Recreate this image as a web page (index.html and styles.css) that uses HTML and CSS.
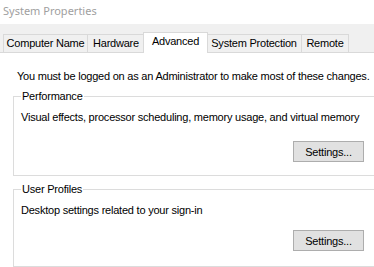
FILE: index.html
```html
<!DOCTYPE html>
<html>
<head>
<meta charset="utf-8">
<link rel="stylesheet" href="styles.css">
</head>
<body>
<div class="window">
  <div class="titlebar">System Properties</div>
  <div class="tabstrip">
    <div class="tab w-cn">Computer Name</div>
    <div class="tab w-hw">Hardware</div>
    <div class="tab active w-adv">Advanced</div>
    <div class="tab w-sp">System Protection</div>
    <div class="tab w-rm">Remote</div>
  </div>
  <div class="page">
    <p class="notice">You must be logged on as an Administrator to make most of these changes.</p>
    <fieldset class="group g1">
      <legend>Performance</legend>
      <p class="desc">Visual effects, processor scheduling, memory usage, and virtual memory</p>
      <div class="actions"><button class="btn">Settings...</button></div>
    </fieldset>
    <fieldset class="group g2">
      <legend>User Profiles</legend>
      <p class="desc">Desktop settings related to your sign-in</p>
      <div class="actions"><button class="btn">Settings...</button></div>
    </fieldset>
  </div>
</div>
</body>
</html>
```

FILE: styles.css
```css
html, body {
  margin: 0;
  padding: 0;
  background: #ffffff;
  overflow: hidden;
}
body {
  width: 374px;
  height: 267px;
  font-family: "Liberation Sans", Arial, sans-serif;
  font-size: 11px;
  letter-spacing: -0.22px;
  color: #000;
}
.window {
  display: flex;
  flex-direction: column;
}
.titlebar {
  height: 24px;
  box-sizing: border-box;
  padding: 3px 0 0 3px;
  font-family: "Noto Sans", sans-serif;
  font-size: 11px;
  letter-spacing: 0;
  color: #a0a0a0;
  background: #fff;
}
.tabstrip {
  height: 29px;
  box-sizing: border-box;
  background: #f0f0f0;
  border-bottom: 1px solid #d9d9d9;
  display: flex;
  align-items: flex-end;
  padding-left: 3px;
}
.tab {
  height: 18px;
  box-sizing: border-box;
  border: 1px solid #d9d9d9;
  border-bottom: none;
  border-left: none;
  background: #f0f0f0;
  display: flex;
  align-items: center;
  justify-content: center;
  line-height: 13px;
  white-space: nowrap;
}
.tab:first-child { border-left: 1px solid #d9d9d9; }
.w-cn { width: 85px; }
.w-hw { width: 57px; }
.w-adv { width: 65px; }
.w-sp { width: 95px; }
.w-rm { width: 47px; }
.tab.active {
  height: 21px;
  background: #fff;
  border-left: 1px solid #d9d9d9;
  margin: 0 -1px -1px -2px;
  padding-bottom: 3px;
  position: relative;
  z-index: 1;
}
.page {
  padding: 17px 0 0 13px;
}
.notice {
  margin: 0 0 7px 4px;
  line-height: 13px;
  white-space: nowrap;
}
.group {
  margin: 0 -30px 0 0;
  padding: 0 0 0 7px;
  border: 1px solid #dcdcdc;
  min-width: 0;
  box-sizing: border-box;
}
.group legend {
  padding: 0 1px;
  margin-left: 0;
  line-height: 13px;
}
.g1 { height: 86px; }
.g2 { height: 84px; margin-top: 7px; }
.desc {
  margin: 8px 0 0 0;
  line-height: 13px;
  white-space: nowrap;
}
.g1 .actions { margin-top: 17px; }
.g2 .actions { margin-top: 13px; }
.actions {
  display: flex;
  padding-left: 272px;
}
.btn {
  width: 71px;
  height: 21px;
  box-sizing: border-box;
  border: 1px solid #adadad;
  background: #e1e1e1;
  font-family: "Liberation Sans", Arial, sans-serif;
  font-size: 11px;
  letter-spacing: -0.22px;
  color: #000;
  padding: 0;
  border-radius: 0;
}
```
